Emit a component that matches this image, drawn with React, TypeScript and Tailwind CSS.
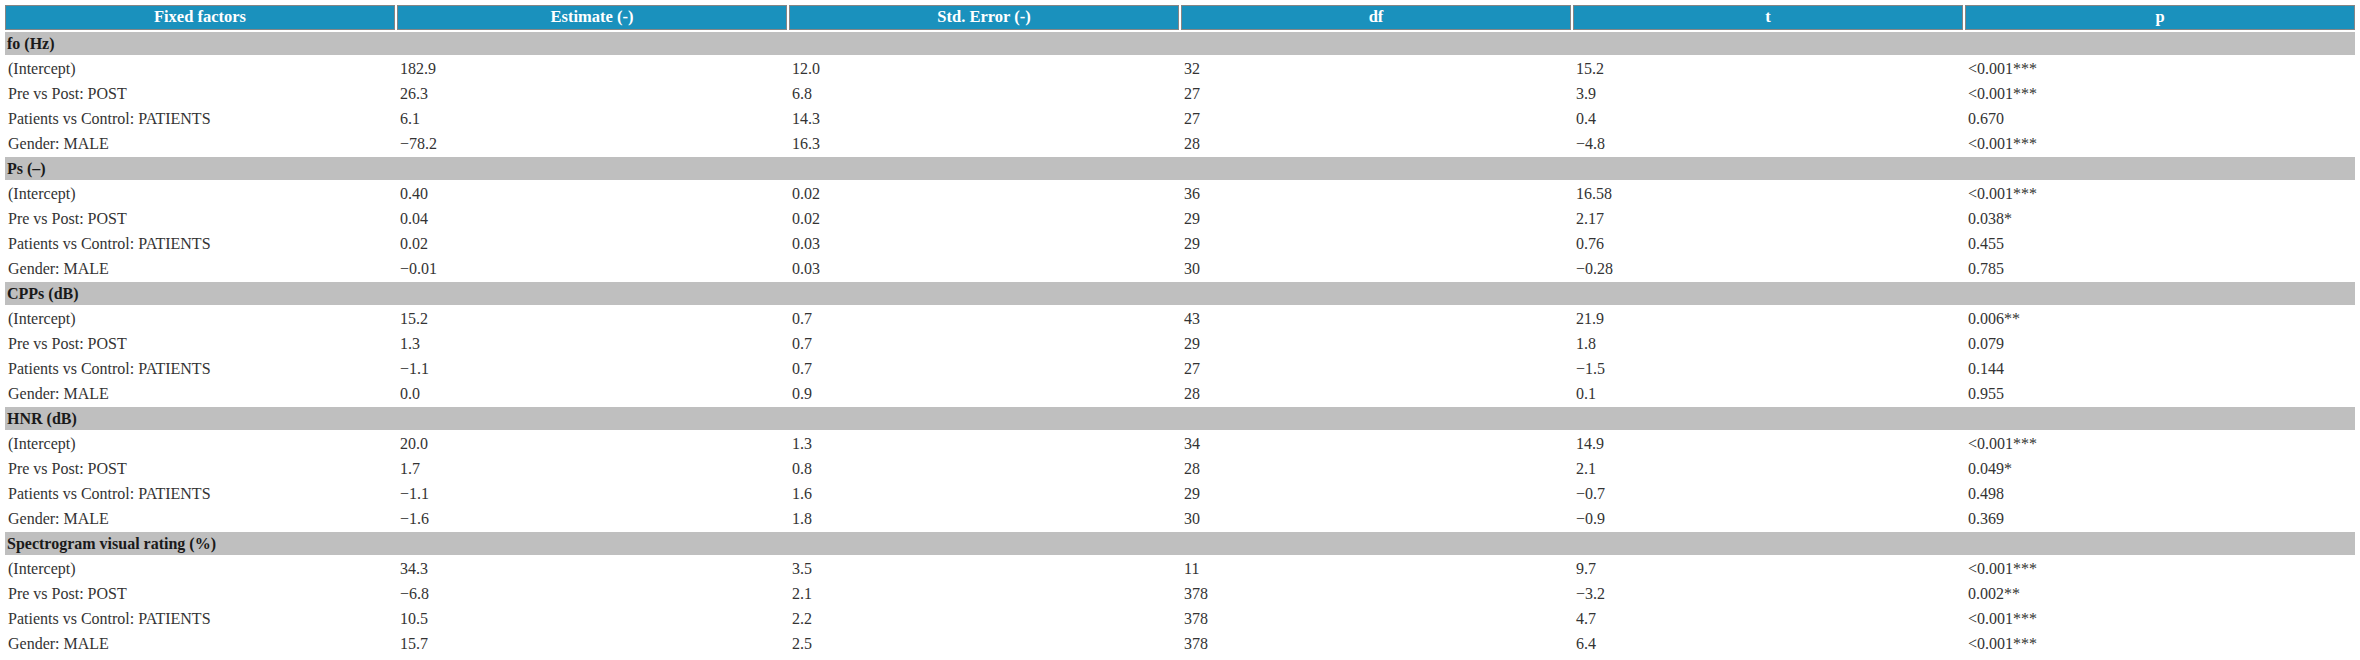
const columns = ['Fixed factors', 'Estimate (-)', 'Std. Error (-)', 'df', 't', 'p'];

type Section = {
  title: string;
  rows: string[][];
};

const factors = ['(Intercept)', 'Pre vs Post: POST', 'Patients vs Control: PATIENTS', 'Gender: MALE'];

const sections: Section[] = [
  {
    title: 'fo (Hz)',
    rows: [
      ['182.9', '12.0', '32', '15.2', '<0.001***'],
      ['26.3', '6.8', '27', '3.9', '<0.001***'],
      ['6.1', '14.3', '27', '0.4', '0.670'],
      ['−78.2', '16.3', '28', '−4.8', '<0.001***'],
    ],
  },
  {
    title: 'Ps (–)',
    rows: [
      ['0.40', '0.02', '36', '16.58', '<0.001***'],
      ['0.04', '0.02', '29', '2.17', '0.038*'],
      ['0.02', '0.03', '29', '0.76', '0.455'],
      ['−0.01', '0.03', '30', '−0.28', '0.785'],
    ],
  },
  {
    title: 'CPPs (dB)',
    rows: [
      ['15.2', '0.7', '43', '21.9', '0.006**'],
      ['1.3', '0.7', '29', '1.8', '0.079'],
      ['−1.1', '0.7', '27', '−1.5', '0.144'],
      ['0.0', '0.9', '28', '0.1', '0.955'],
    ],
  },
  {
    title: 'HNR (dB)',
    rows: [
      ['20.0', '1.3', '34', '14.9', '<0.001***'],
      ['1.7', '0.8', '28', '2.1', '0.049*'],
      ['−1.1', '1.6', '29', '−0.7', '0.498'],
      ['−1.6', '1.8', '30', '−0.9', '0.369'],
    ],
  },
  {
    title: 'Spectrogram visual rating (%)',
    rows: [
      ['34.3', '3.5', '11', '9.7', '<0.001***'],
      ['−6.8', '2.1', '378', '−3.2', '0.002**'],
      ['10.5', '2.2', '378', '4.7', '<0.001***'],
      ['15.7', '2.5', '378', '6.4', '<0.001***'],
    ],
  },
];

export default function App() {
  return (
    <div className="bg-white pl-[3px] pt-[3px] font-['Liberation_Serif',serif] text-[16px]">
      <table className="w-[2354px] table-fixed border-separate border-spacing-[2px]">
        <thead>
          <tr>
            {columns.map((c) => (
              <th
                key={c}
                className="h-[25px] w-[390px] border border-[#858585] bg-[#1a91bd] p-0 text-center text-[16.5px] font-bold leading-none text-white"
              >
                {c}
              </th>
            ))}
          </tr>
        </thead>
        <tbody>
          {sections.map((s) => (
            <>
              <tr key={s.title}>
                <td colSpan={6} className="h-[23px] bg-[#bfbfbf] px-[2px] py-0 font-bold leading-none text-[#1a1a1a]">
                  {s.title}
                </td>
              </tr>
              {s.rows.map((r, i) => (
                <tr key={s.title + i}>
                  <td className="h-[23px] px-[3px] py-0 leading-none text-[#333]">{factors[i]}</td>
                  {r.map((v, j) => (
                    <td key={j} className="h-[23px] px-[3px] py-0 leading-none text-[#333]">
                      {v}
                    </td>
                  ))}
                </tr>
              ))}
            </>
          ))}
        </tbody>
      </table>
    </div>
  );
}
